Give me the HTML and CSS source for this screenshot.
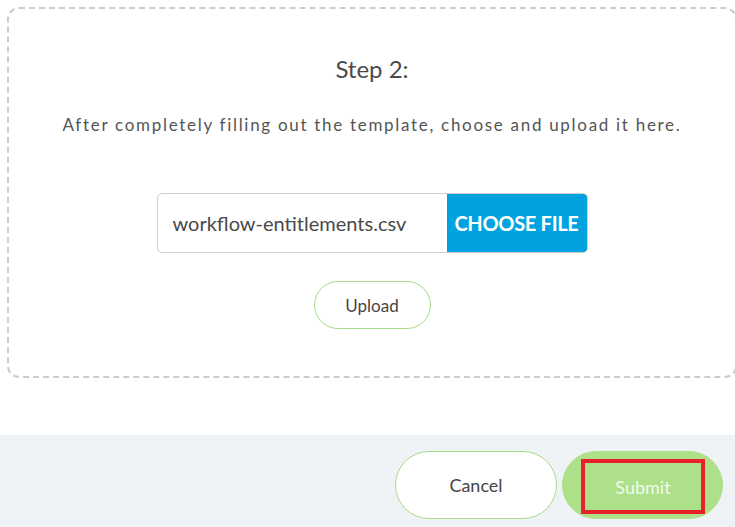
FILE: index.html
```html
<!DOCTYPE html>
<html lang="en">
<head>
    <meta charset="UTF-8">
    <title>Upload Template</title>
    <link rel="stylesheet" href="styles.css">
</head>
<body>
    <div class="step-box">
        <h2>Step 2:</h2>
        <p class="hint">After completely filling out the template, choose and upload it here.</p>
        <div class="file-picker">
            <span class="file-name">workflow-entitlements.csv</span>
            <button class="choose">CHOOSE FILE</button>
        </div>
        <button class="pill upload">Upload</button>
    </div>

    <div class="footer">
        <button class="pill cancel">Cancel</button>
        <button class="pill submit"><span class="focus-mark">Submit</span></button>
    </div>
</body>
</html>
```

FILE: styles.css
```css
html, body {
    margin: 0;
    padding: 0;
    overflow: hidden;
}
body {
    font-family: Lato, "Open Sans", sans-serif;
    color: #4a4a4a;
    background-color: white;
    width: 735px;
}
button {
    font-family: inherit;
    cursor: pointer;
}
.step-box {
    margin: 7px 0 0 7px;
    width: 730px;
    height: 371px;
    box-sizing: border-box;
    border: 2px dashed #cccccc;
    border-radius: 12px;
    display: flex;
    flex-direction: column;
    align-items: center;
}
.step-box h2 {
    margin: 43px 0 0 0;
    font-size: 24px;
    font-weight: normal;
    line-height: 34px;
}
.hint {
    margin: 27px 0 0 0;
    font-size: 17px;
    letter-spacing: 1.7px;
    line-height: 24px;
    color: #555;
}
.file-picker {
    margin-top: 56px;
    width: 431px;
    height: 60px;
    box-sizing: border-box;
    border: 1px solid #cfcfcf;
    border-radius: 5px;
    display: flex;
    overflow: hidden;
}
.file-name {
    flex: 1;
    padding-left: 15px;
    font-size: 20px;
    line-height: 58px;
}
.choose {
    width: 140px;
    border: none;
    background-color: #00a3e0;
    color: white;
    font-size: 20px;
    font-weight: bold;
    letter-spacing: -0.3px;
    padding: 0;
}
.pill {
    border-radius: 40px;
    background: white;
    border: 1px solid #a6dc8a;
    color: #454545;
}
.upload {
    margin-top: 28px;
    width: 117px;
    height: 48px;
    font-size: 17px;
}
.footer {
    margin-top: 57px;
    height: 92px;
    background-color: #eff3f6;
    display: flex;
    justify-content: flex-end;
    align-items: flex-start;
    gap: 5px;
    padding: 16px 12px 0 0;
    box-sizing: border-box;
}
.cancel {
    width: 162px;
    height: 68px;
    font-size: 18px;
}
.submit {
    width: 161px;
    height: 68px;
    background-color: #aee08a;
    border-color: #aee08a;
    color: #f0faec;
    font-size: 18px;
    padding: 0;
    display: flex;
    justify-content: center;
    align-items: center;
}
.focus-mark {
    display: flex;
    align-items: center;
    justify-content: center;
    width: 124px;
    height: 55px;
    box-sizing: border-box;
    border: 4px solid #e8202a;
    margin-left: 1px;
    margin-top: 3px;
}
```
